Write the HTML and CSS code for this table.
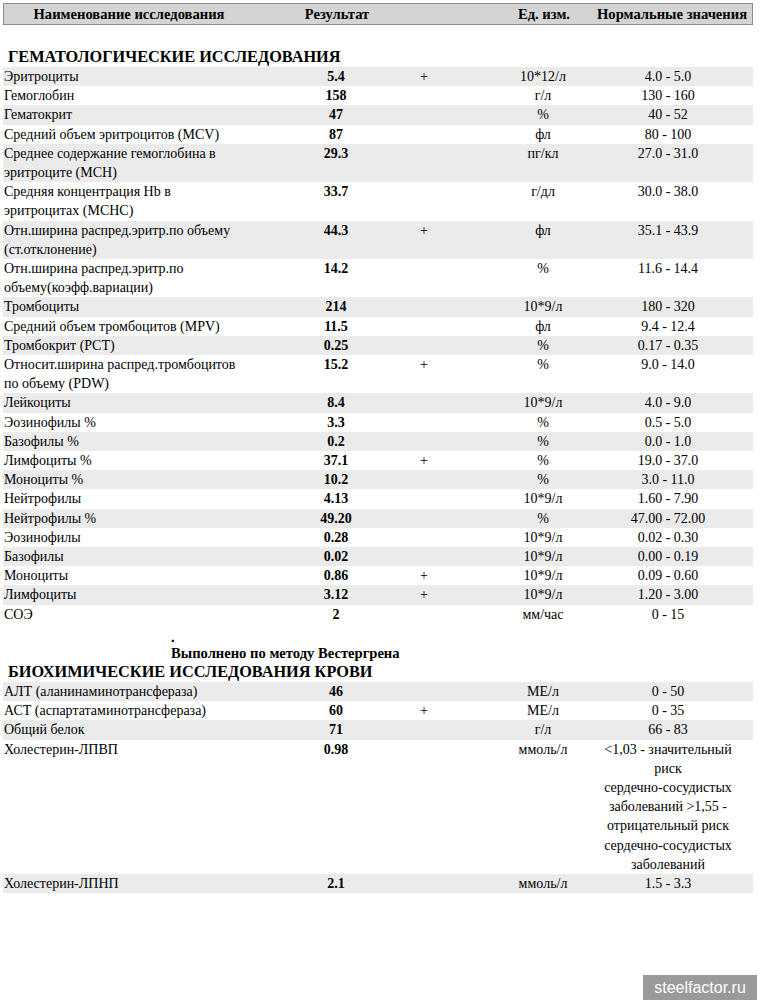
FILE: index.html
```html
<!DOCTYPE html>
<html lang="ru">
<head>
<meta charset="utf-8">
<title>Результаты исследований</title>
<link rel="stylesheet" href="styles.css">
</head>
<body>
<div class="page">
  <div class="thead">
    <div class="th th-name">Наименование исследования</div>
    <div class="th th-res">Результат</div>
    <div class="th th-unit">Ед. изм.</div>
    <div class="th th-norm">Нормальные значения</div>
  </div>

  <h2 class="section first">ГЕМАТОЛОГИЧЕСКИЕ ИССЛЕДОВАНИЯ</h2>
  <div class="rows">
    <div class="row alt"><div class="name">Эритроциты</div><div class="res">5.4</div><div class="flag">+</div><div class="unit">10*12/л</div><div class="norm">4.0 - 5.0</div></div>
    <div class="row"><div class="name">Гемоглобин</div><div class="res">158</div><div class="unit">г/л</div><div class="norm">130 - 160</div></div>
    <div class="row alt"><div class="name">Гематокрит</div><div class="res">47</div><div class="unit">%</div><div class="norm">40 - 52</div></div>
    <div class="row"><div class="name">Средний объем эритроцитов (MCV)</div><div class="res">87</div><div class="unit">фл</div><div class="norm">80 - 100</div></div>
    <div class="row alt"><div class="name">Среднее содержание гемоглобина в<br>эритроците (MCH)</div><div class="res">29.3</div><div class="unit">пг/кл</div><div class="norm">27.0 - 31.0</div></div>
    <div class="row"><div class="name">Средняя концентрация Hb в<br>эритроцитах (MCHC)</div><div class="res">33.7</div><div class="unit">г/дл</div><div class="norm">30.0 - 38.0</div></div>
    <div class="row alt"><div class="name">Отн.ширина распред.эритр.по объему<br>(ст.отклонение)</div><div class="res">44.3</div><div class="flag">+</div><div class="unit">фл</div><div class="norm">35.1 - 43.9</div></div>
    <div class="row"><div class="name">Отн.ширина распред.эритр.по<br>объему(коэфф.вариации)</div><div class="res">14.2</div><div class="unit">%</div><div class="norm">11.6 - 14.4</div></div>
    <div class="row alt"><div class="name">Тромбоциты</div><div class="res">214</div><div class="unit">10*9/л</div><div class="norm">180 - 320</div></div>
    <div class="row"><div class="name">Средний объем тромбоцитов (MPV)</div><div class="res">11.5</div><div class="unit">фл</div><div class="norm">9.4 - 12.4</div></div>
    <div class="row alt"><div class="name">Тромбокрит (PCT)</div><div class="res">0.25</div><div class="unit">%</div><div class="norm">0.17 - 0.35</div></div>
    <div class="row"><div class="name">Относит.ширина распред.тромбоцитов<br>по объему (PDW)</div><div class="res">15.2</div><div class="flag">+</div><div class="unit">%</div><div class="norm">9.0 - 14.0</div></div>
    <div class="row alt"><div class="name">Лейкоциты</div><div class="res">8.4</div><div class="unit">10*9/л</div><div class="norm">4.0 - 9.0</div></div>
    <div class="row"><div class="name">Эозинофилы %</div><div class="res">3.3</div><div class="unit">%</div><div class="norm">0.5 - 5.0</div></div>
    <div class="row alt"><div class="name">Базофилы %</div><div class="res">0.2</div><div class="unit">%</div><div class="norm">0.0 - 1.0</div></div>
    <div class="row"><div class="name">Лимфоциты %</div><div class="res">37.1</div><div class="flag">+</div><div class="unit">%</div><div class="norm">19.0 - 37.0</div></div>
    <div class="row alt"><div class="name">Моноциты %</div><div class="res">10.2</div><div class="unit">%</div><div class="norm">3.0 - 11.0</div></div>
    <div class="row"><div class="name">Нейтрофилы</div><div class="res">4.13</div><div class="unit">10*9/л</div><div class="norm">1.60 - 7.90</div></div>
    <div class="row alt"><div class="name">Нейтрофилы %</div><div class="res">49.20</div><div class="unit">%</div><div class="norm">47.00 - 72.00</div></div>
    <div class="row"><div class="name">Эозинофилы</div><div class="res">0.28</div><div class="unit">10*9/л</div><div class="norm">0.02 - 0.30</div></div>
    <div class="row alt"><div class="name">Базофилы</div><div class="res">0.02</div><div class="unit">10*9/л</div><div class="norm">0.00 - 0.19</div></div>
    <div class="row"><div class="name">Моноциты</div><div class="res">0.86</div><div class="flag">+</div><div class="unit">10*9/л</div><div class="norm">0.09 - 0.60</div></div>
    <div class="row alt"><div class="name">Лимфоциты</div><div class="res">3.12</div><div class="flag">+</div><div class="unit">10*9/л</div><div class="norm">1.20 - 3.00</div></div>
    <div class="row"><div class="name">СОЭ</div><div class="res">2</div><div class="unit">мм/час</div><div class="norm">0 - 15</div></div>
  </div>
  <div class="note">
    <div class="note-dot">.</div>
    <div class="note-text">Выполнено по методу Вестергрена</div>
  </div>

  <h2 class="section second">БИОХИМИЧЕСКИЕ ИССЛЕДОВАНИЯ КРОВИ</h2>
  <div class="rows">
    <div class="row alt"><div class="name">АЛТ (аланинаминотрансфераза)</div><div class="res">46</div><div class="unit">МЕ/л</div><div class="norm">0 - 50</div></div>
    <div class="row"><div class="name">АСТ (аспартатаминотрансфераза)</div><div class="res">60</div><div class="flag">+</div><div class="unit">МЕ/л</div><div class="norm">0 - 35</div></div>
    <div class="row alt"><div class="name">Общий белок</div><div class="res">71</div><div class="unit">г/л</div><div class="norm">66 - 83</div></div>
    <div class="row"><div class="name">Холестерин-ЛПВП</div><div class="res">0.98</div><div class="unit">ммоль/л</div><div class="norm">&lt;1,03 - значительный<br>риск<br>сердечно-сосудистых<br>заболеваний &gt;1,55 -<br>отрицательный риск<br>сердечно-сосудистых<br>заболеваний</div></div>
    <div class="row alt"><div class="name">Холестерин-ЛПНП</div><div class="res">2.1</div><div class="unit">ммоль/л</div><div class="norm">1.5 - 3.3</div></div>
  </div>
</div>
<div class="watermark">steelfactor.ru</div>
</body>
</html>
```

FILE: styles.css
```css
html, body {
  margin: 0;
  padding: 0;
  background: #ffffff;
}

body {
  font-family: "Liberation Serif", "Times New Roman", serif;
  font-size: 14px;
  color: #000000;
  position: relative;
  min-height: 1000px;
}

.page {
  width: 750px;
  padding: 3px 0 0 3px;
}

.thead,
.row {
  display: grid;
  grid-template-columns: 265px 136px 40px 46px 106px 144px 13px;
}

.thead {
  box-sizing: border-box;
  height: 22px;
  background: #d4d4d4;
  border: 1px solid #8c8c8c;
  font-weight: bold;
  font-size: 14.6px;
  line-height: 20px;
  align-items: center;
}

.th {
  text-align: center;
  white-space: nowrap;
}

.th-name { grid-column: 1; padding-right: 15px; }
.th-res { grid-column: 2; }
.th-unit { grid-column: 5; }
.th-norm { grid-column: 6; }

.section {
  margin: 0;
  font-size: 16.3px;
  font-weight: bold;
  line-height: 21px;
  padding-left: 5px;
}

.section.first {
  margin-top: 21px;
}

.row {
  line-height: 19.2px;
}

.row.alt {
  background: #ebebeb;
}

.name {
  grid-column: 1;
  padding-left: 1px;
  white-space: nowrap;
}

.res {
  grid-column: 2;
  text-align: center;
  font-weight: bold;
}

.flag {
  grid-column: 3;
  text-align: center;
}

.unit {
  grid-column: 5;
  text-align: center;
}

.norm {
  grid-column: 6;
  text-align: center;
}

.note {
  padding-left: 168px;
  font-weight: bold;
  font-size: 14.6px;
  line-height: 16px;
  padding-top: 5px;
  padding-bottom: 0;
}

.watermark {
  position: absolute;
  left: 643px;
  top: 975px;
  width: 114px;
  height: 25px;
  background: #9a9a9a;
  color: #ffffff;
  font-family: "Liberation Sans", Arial, sans-serif;
  font-size: 16px;
  line-height: 25px;
  text-align: center;
}
```
